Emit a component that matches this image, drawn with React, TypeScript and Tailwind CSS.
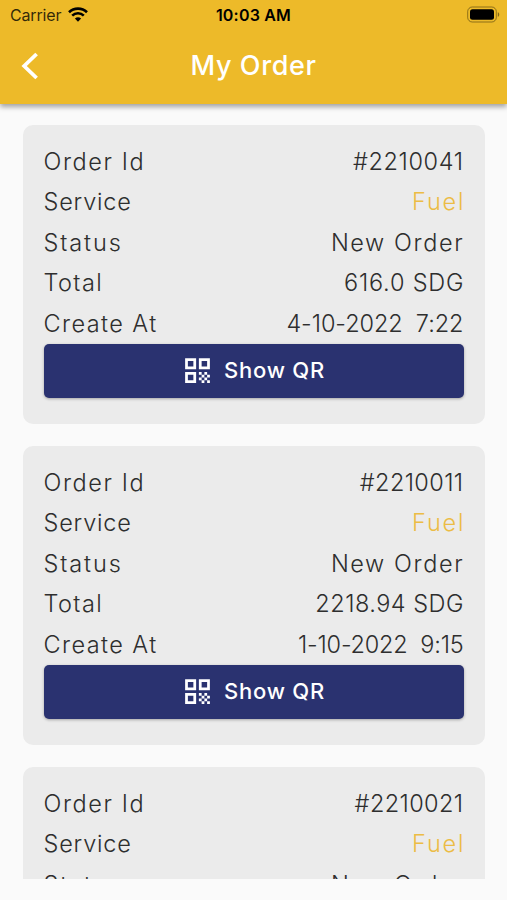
import React from "react";
import { MdQrCode } from "react-icons/md";

type Field = {
  value: string;
  className: string;
};

type Order = {
  id: Field;
  service: Field;
  status: Field;
  total: Field;
  createdAt: Field;
};

const fuel: Field = {
  value: "Fuel",
  className: "font-[350] text-[#ecbc45] tracking-[1.8px] -mr-[1.8px]",
};
const newOrder: Field = {
  value: "New Order",
  className: "tracking-[1.6px] -mr-[0.7px]",
};

const orders: Order[] = [
  {
    id: { value: "#2210041", className: "tracking-[0.6px]" },
    service: fuel,
    status: newOrder,
    total: { value: "616.0 SDG", className: "tracking-[0.8px] -mr-[0.8px]" },
    createdAt: { value: "4-10-2022  7:22", className: "tracking-[-0.05px]" },
  },
  {
    id: { value: "#2210011", className: "tracking-[0.4px]" },
    service: fuel,
    status: newOrder,
    total: { value: "2218.94 SDG", className: "tracking-[0.5px] -mr-[0.5px]" },
    createdAt: { value: "1-10-2022  9:15", className: "tracking-[-0.2px]" },
  },
  {
    id: { value: "#2210021", className: "tracking-[0.4px]" },
    service: fuel,
    status: newOrder,
    total: { value: "616.0 SDG", className: "tracking-[0.8px] -mr-[0.8px]" },
    createdAt: { value: "1-10-2022  9:15", className: "tracking-[-0.2px]" },
  },
];

const StatusBar: React.FC = () => (
  <div className="grid h-[30px] grid-cols-3 items-center pr-[7px] pl-[10px] text-black">
    <div className="flex items-center gap-[7px]">
      <span className="text-[16px] leading-none tracking-[-0.15px] text-black/80">
        Carrier
      </span>
      <svg className="-mt-[2px]" width="20" height="15" viewBox="0 0 20 15" fill="none">
        <path d="M1 5.2a13 13 0 0 1 18 0" stroke="black" strokeWidth="2.6" />
        <path d="M4.2 8.6a8.4 8.4 0 0 1 11.6 0" stroke="black" strokeWidth="2.6" />
        <path d="M10 14.8 6.9 11.6a4.5 4.5 0 0 1 6.2 0Z" fill="black" />
      </svg>
    </div>
    <span className="-ml-[3px] text-center text-[16px] font-semibold leading-none tracking-[0.2px] whitespace-nowrap">
      10:03 AM
    </span>
    <svg className="-mt-[2px] justify-self-end" width="33" height="17" viewBox="0 0 33 17">
      <rect x="0.7" y="1" width="28.6" height="15" rx="4.5" fill="none" stroke="black" strokeOpacity="0.4" />
      <rect x="3" y="3.2" width="24" height="10.6" rx="2.5" fill="black" />
      <path d="M30.8 6.2c1.9.7 1.9 3.9 0 4.6Z" fill="black" fillOpacity="0.45" />
    </svg>
  </div>
);

const Row: React.FC<{ label: string; labelClass: string; field: Field }> = ({
  label,
  labelClass,
  field,
}) => (
  <div className="flex h-[40.5px] items-center justify-between">
    <span className={labelClass}>{label}</span>
    <span className={`whitespace-pre ${field.className}`}>{field.value}</span>
  </div>
);

const OrderCard: React.FC<{ order: Order }> = ({ order }) => (
  <div className="h-[299px] shrink-0 rounded-[10px] bg-[#ebebeb] px-[21px] pt-[16px] text-[23.5px] font-light text-[#2e2e2e]">
    <Row label="Order Id" labelClass="tracking-[1.6px]" field={order.id} />
    <Row label="Service" labelClass="tracking-[0.8px]" field={order.service} />
    <Row label="Status" labelClass="tracking-[1.9px]" field={order.status} />
    <Row label="Total" labelClass="tracking-[1.4px]" field={order.total} />
    <Row label="Create At" labelClass="tracking-[1.4px]" field={order.createdAt} />
    <button className="flex h-[54px] w-full items-center justify-center gap-[10px] rounded-[5px] bg-[#2a3270] text-[22px] font-medium text-white shadow-[0_1px_3px_rgba(0,0,0,0.3)]">
      <MdQrCode size={33} className="-ml-[1px]" />
      <span className="tracking-[0.8px]">Show QR</span>
    </button>
  </div>
);

const App: React.FC = () => {
  return (
    <div className="flex h-[900px] w-[507px] flex-col overflow-hidden bg-[#fafafa] font-['Inter',sans-serif]">
      <header className="z-10 h-[103.5px] shrink-0 bg-[#edba29] shadow-[0_3px_5px_rgba(0,0,0,0.35)]">
        <StatusBar />
        <div className="grid h-[72px] grid-cols-[60px_1fr_60px] items-center text-white">
          <svg className="ml-[21px]" width="18" height="28" viewBox="0 0 18 28" fill="none">
            <path d="M15.6 2 3.2 14l12.4 12" stroke="currentColor" strokeWidth="3.8" />
          </svg>
          <h1 className="text-center text-[27px] font-medium tracking-[0.6px]">
            My Order
          </h1>
        </div>
      </header>
      <main className="flex h-[775.5px] shrink-0 flex-col gap-[22px] overflow-hidden px-[22.5px] pt-[21.5px]">
        {orders.map((order) => (
          <OrderCard key={order.id.value} order={order} />
        ))}
      </main>
    </div>
  );
};

export default App;
